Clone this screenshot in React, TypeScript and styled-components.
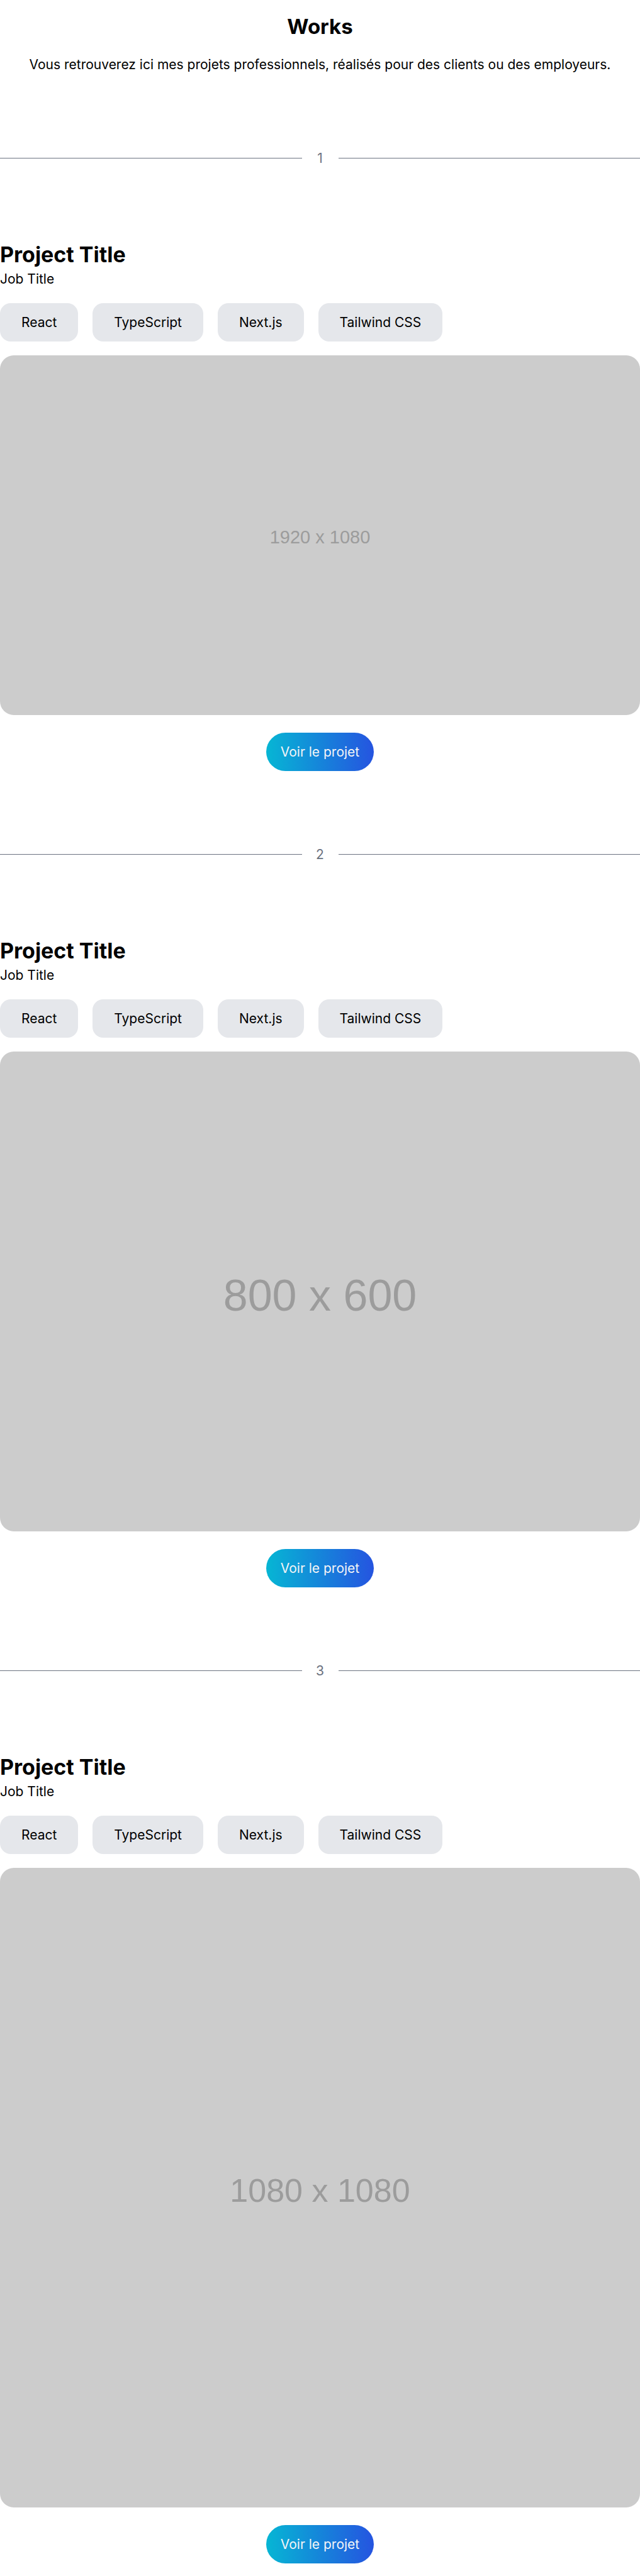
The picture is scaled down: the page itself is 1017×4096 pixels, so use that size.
import React from "react";
import styled, { createGlobalStyle } from "styled-components";

const GlobalStyle = createGlobalStyle`
  *, *::before, *::after { box-sizing: border-box; }
  body {
    margin: 0;
    background: #ffffff;
    color: #000000;
    font-family: Inter, "Liberation Sans", sans-serif;
    font-size: 21px;
    line-height: 33px;
  }
`;

const Page = styled.main`
  display: flex;
  flex-direction: column;
  padding: 20px 0;
`;

const Header = styled.header`
  display: flex;
  flex-direction: column;
  gap: 22px;
  text-align: center;
`;

const PageTitle = styled.h1`
  margin: 0;
  font-size: 33px;
  line-height: 44px;
  font-weight: 700;
`;

const Intro = styled.p`
  margin: 0;
`;

const Divider = styled.div`
  display: flex;
  align-items: center;
  gap: 22px;
  margin: 116px 0 115px;
  color: #6b7280;

  &::before,
  &::after {
    content: "";
    flex: 1;
    height: 1px;
    background: currentColor;
  }
`;

const DividerNumber = styled.span`
  min-width: 14px;
  text-align: center;
`;

const Project = styled.article`
  display: flex;
  flex-direction: column;
`;

const ProjectTitle = styled.h2`
  margin: 0;
  font-size: 34px;
  line-height: 44px;
  font-weight: 700;
`;

const JobTitle = styled.p`
  margin: 0;
`;

const Tags = styled.ul`
  display: flex;
  flex-wrap: wrap;
  gap: 23px;
  margin: 22px 0;
  padding: 0;
  list-style: none;
`;

const Tag = styled.li`
  padding: 14px 34px;
  border-radius: 17px;
  background: #e5e7eb;
`;

const Preview = styled.div<{ $ratio: string; $size: number; $drop: number }>`
  display: flex;
  align-items: center;
  justify-content: center;
  aspect-ratio: ${(p) => p.$ratio};
  padding-top: ${(p) => p.$drop}px;
  border-radius: 22px;
  background: #cccccc;
  color: #9c9c9c;
  font-family: "Liberation Sans", Arial, sans-serif;
  font-size: ${(p) => p.$size}px;
  line-height: 1;
`;

const ProjectLink = styled.a`
  align-self: center;
  margin-top: 28px;
  padding: 14px 23px;
  border-radius: 31px;
  background: linear-gradient(to right, #06b6d4, #2554e0);
  color: #f3f4f6;
  text-decoration: none;
`;

const tags = ["React", "TypeScript", "Next.js", "Tailwind CSS"];

const projects = [
  { width: 1920, height: 1080, size: 29, drop: 6 },
  { width: 800, height: 600, size: 70, drop: 14 },
  { width: 1080, height: 1080, size: 52, drop: 10 },
];

export default function App() {
  return (
    <>
      <GlobalStyle />
      <Page>
        <Header>
          <PageTitle>Works</PageTitle>
          <Intro>
            Vous retrouverez ici mes projets professionnels, réalisés pour des clients ou des employeurs.
          </Intro>
        </Header>
        {projects.map((project, index) => (
          <React.Fragment key={index}>
            <Divider>
              <DividerNumber>{index + 1}</DividerNumber>
            </Divider>
            <Project>
              <ProjectTitle>Project Title</ProjectTitle>
              <JobTitle>Job Title</JobTitle>
              <Tags>
                {tags.map((tag) => (
                  <Tag key={tag}>{tag}</Tag>
                ))}
              </Tags>
              <Preview
                $ratio={`${project.width} / ${project.height}`}
                $size={project.size}
                $drop={project.drop}
              >
                {project.width} x {project.height}
              </Preview>
              <ProjectLink href="#">Voir le projet</ProjectLink>
            </Project>
          </React.Fragment>
        ))}
      </Page>
    </>
  );
}
